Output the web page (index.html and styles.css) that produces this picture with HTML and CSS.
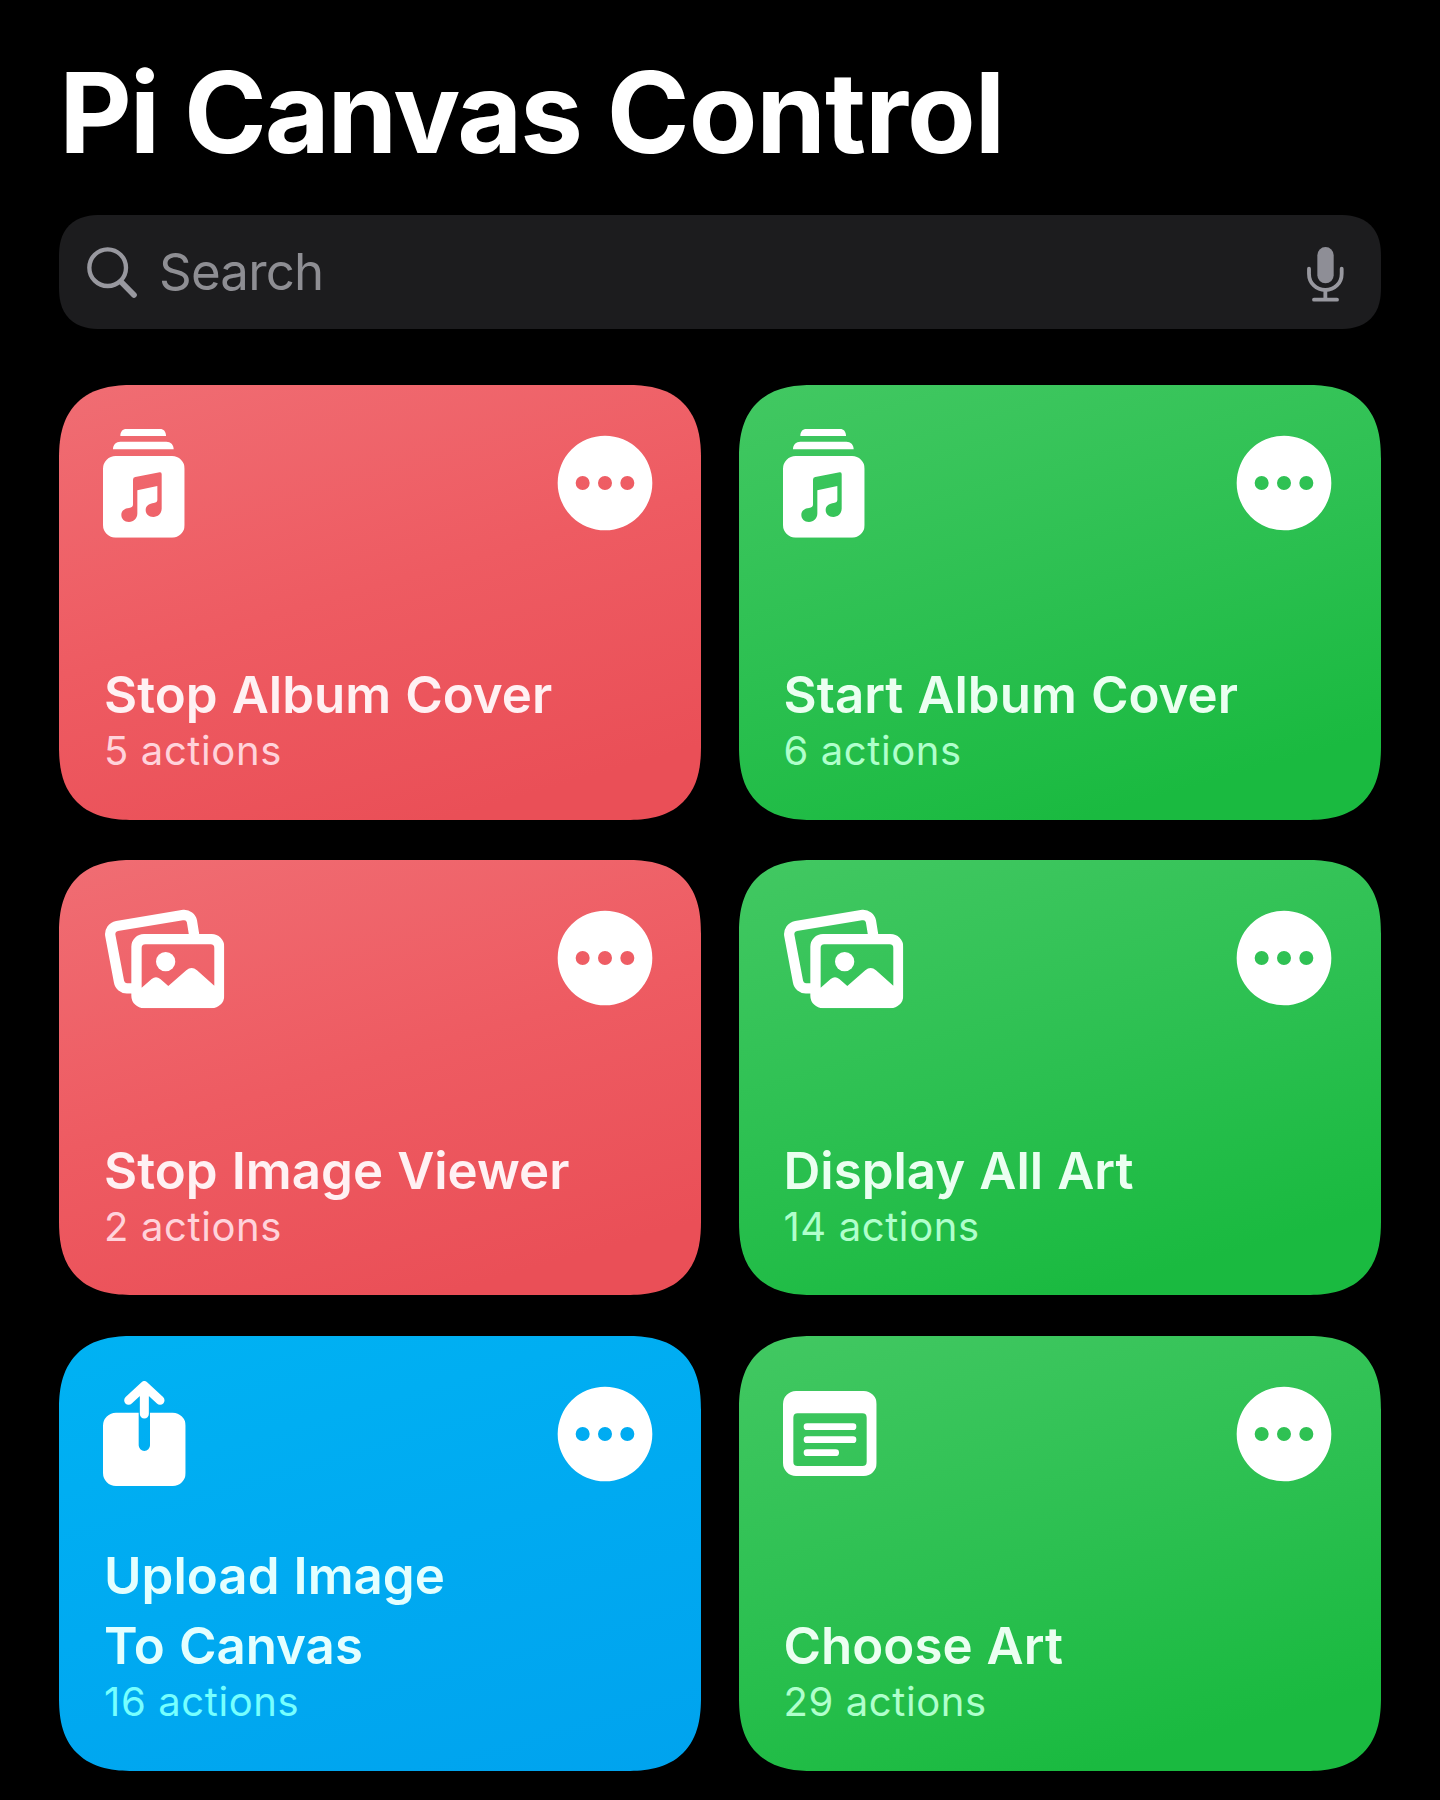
FILE: index.html
```html
<!DOCTYPE html>
<html lang="en">
<head>
<meta charset="utf-8">
<title>Pi Canvas Control</title>
<link rel="stylesheet" href="styles.css">
</head>
<body>
<svg class="sprite" aria-hidden="true">
  <symbol id="album" viewBox="160 162 245 326">
    <path d="M212 183C212 170 219 162 230 162H331C342 162 349 170 349 183ZM190 223C190 209 199 200 212 200H350C363 200 372 209 372 223Z"/>
    <path fill-rule="evenodd" d="M198 243H367A38 38 0 0 1 405 281V450A38 38 0 0 1 367 488H198A38 38 0 0 1 160 450V281A38 38 0 0 1 198 243ZM257 306L330 292Q336 291 336 298V400C336 417 324 426 311 426C297 426 288 417 288 405C288 391 300 386 312 384C320 382 323 380 323 374V333L263 346V415C263 431 252 441 238 441C224 441 215 431 215 420C215 406 226 400 238 399C247 397 250 395 250 388V314Q250 307 257 306Z"/>
  </symbol>
  <symbol id="photos" viewBox="44 57 358 298">
    <path fill="none" stroke="currentColor" stroke-width="31" d="M126 295H110A24 24 0 0 1 86 275L60 137A25 25 0 0 1 80 108L280 75A24 24 0 0 1 305 94L312 138"/>
    <path fill-rule="evenodd" d="M161 132H364A38 38 0 0 1 402 170V317A38 38 0 0 1 364 355H161A38 38 0 0 1 123 317V170A38 38 0 0 1 161 132ZM165 163Q154 163 154 174V293L184 267Q197 256 210 267L234 288L288 241Q304 227 320 241L372 287V174Q372 163 361 163Z"/>
    <circle cx="226" cy="215" r="29"/>
  </symbol>
  <symbol id="upload" viewBox="70 65 248 315">
    <path d="M109 160H177V258A17 17 0 0 0 211 258V160H279A39 39 0 0 1 318 199V341A39 39 0 0 1 279 380H109A39 39 0 0 1 70 341V199A39 39 0 0 1 109 160Z"/>
    <path fill="none" stroke="currentColor" stroke-width="27" stroke-linecap="round" stroke-linejoin="round" d="M147 123L194 79L241 123M194 82V164"/>
  </symbol>
  <symbol id="note" viewBox="68 65 281 255">
    <path fill-rule="evenodd" d="M107 65H310A39 39 0 0 1 349 104V281A39 39 0 0 1 310 320H107A39 39 0 0 1 68 281V104A39 39 0 0 1 107 65ZM112 132Q99 132 99 145V277Q99 290 112 290H306Q319 290 319 277V145Q319 132 306 132Z"/>
    <path fill="none" stroke="currentColor" stroke-width="20" stroke-linecap="round" d="M140 172H278M140 211H278M140 250H226"/>
  </symbol>
  <symbol id="more" viewBox="0 0 288 288">
    <path fill-rule="evenodd" d="M2 144a142 142 0 0 1 284 0a142 142 0 0 1-284 0ZM56 144a21 21 0 0 0 42 0a21 21 0 0 0-42 0ZM123 144a21 21 0 0 0 42 0a21 21 0 0 0-42 0ZM190 144a21 21 0 0 0 42 0a21 21 0 0 0-42 0Z"/>
  </symbol>
</svg>

<main class="page">
  <h1 class="title">Pi Canvas <span class="loose">Control</span></h1>

  <div class="search">
    <svg class="search-icon" viewBox="141 622 150 153"><circle cx="203" cy="684" r="55"/><path d="M243 726L282 766"/></svg>
    <span class="search-label">Search</span>
    <svg class="mic-icon" viewBox="200 141 110 164"><rect x="231" y="141" width="49" height="109" rx="24.5"/><path d="M206 206V221C206 250 228 270 255 270S304 250 304 221V206M255 270V299M221 299H290"/></svg>
  </div>

  <section class="grid">
    <article class="card red">
      <header class="card-top"><svg class="icon album"><use href="#album"/></svg><svg class="more"><use href="#more"/></svg></header>
      <h2 class="name">Stop Album Cover</h2>
      <p class="count">5 actions</p>
    </article>
    <article class="card green">
      <header class="card-top"><svg class="icon album"><use href="#album"/></svg><svg class="more"><use href="#more"/></svg></header>
      <h2 class="name">Start Album Cover</h2>
      <p class="count">6 actions</p>
    </article>
    <article class="card red">
      <header class="card-top"><svg class="icon photos"><use href="#photos"/></svg><svg class="more"><use href="#more"/></svg></header>
      <h2 class="name">Stop Image Viewer</h2>
      <p class="count">2 actions</p>
    </article>
    <article class="card green">
      <header class="card-top"><svg class="icon photos"><use href="#photos"/></svg><svg class="more"><use href="#more"/></svg></header>
      <h2 class="name">Display All Art</h2>
      <p class="count">14 actions</p>
    </article>
    <article class="card blue">
      <header class="card-top"><svg class="icon upload"><use href="#upload"/></svg><svg class="more"><use href="#more"/></svg></header>
      <h2 class="name">Upload Image<br>To Canvas</h2>
      <p class="count">16 actions</p>
    </article>
    <article class="card green">
      <header class="card-top"><svg class="icon note"><use href="#note"/></svg><svg class="more"><use href="#more"/></svg></header>
      <h2 class="name">Choose Art</h2>
      <p class="count">29 actions</p>
    </article>
  </section>
</main>
</body>
</html>
```
FILE: styles.css
```css
* { box-sizing: border-box; }

body {
  margin: 0;
  background: #000;
  color: #fff;
  font-family: Inter, "Liberation Sans", sans-serif;
}

.sprite { display: none; }

.page {
  height: 1800px;
  padding: 45px 59.3px 0;
  overflow: hidden;
}

.title {
  margin: 0;
  height: 170.4px;
  font-size: 112px;
  line-height: 134px;
  font-weight: 700;
  letter-spacing: -2.1px;
  word-spacing: 1.5px;
  white-space: nowrap;
}

.title .loose { letter-spacing: -1px; }

.search {
  display: flex;
  align-items: center;
  height: 114px;
  padding: 0 37.5px 0 27.7px;
  border-radius: 35px;
  background: #1c1c1e;
  color: #8e8e93;
}

.search-icon,
.mic-icon { flex: none; overflow: visible; stroke: #98989f; stroke-linecap: round; }
.search-icon { width: 50px; height: 51px; fill: none; stroke-width: 13; }
.search-icon path { stroke-width: 17; }
.mic-icon { width: 36.7px; height: 54.7px; margin-top: 4px; fill: none; stroke-width: 11.5; }
.mic-icon rect { fill: #8e8e96; stroke: none; }

.search-label {
  flex: 1;
  padding-left: 22px;
  font-size: 51px;
  line-height: 62px;
  letter-spacing: -0.8px;
}

.grid {
  display: grid;
  grid-template-columns: 1fr 1fr;
  grid-auto-rows: 435px;
  gap: 40.5px 37.4px;
  margin-top: 55.4px;
}

.card {
  display: flex;
  flex-direction: column;
  padding: 43.8px 48.7px 47.5px 44px;
  border-radius: 60px;
}

@supports (corner-shape: superellipse(1.4)) {
  .card { border-radius: 74px; corner-shape: superellipse(1.32); }
  .search { border-radius: 42px; corner-shape: superellipse(1.3); }
}

.red { background: linear-gradient(164deg, #f06d73 0%, #ee5b62 47%, #ea4f57 88%); --name: #fff1f3; --count: #ffd3db; }
.green { background: linear-gradient(164deg, #42c862 0%, #2cc051 48%, #1aba40 86%); --name: #ebfff1; --count: #b0ffcc; }
.blue { background: linear-gradient(164deg, #00b2f3 0%, #00aaf1 50%, #00a3ee 100%); --name: #e4ffff; --count: #76ffff; }

.card-top {
  display: flex;
  align-items: center;
  justify-content: space-between;
  height: 108.7px;
  margin-bottom: auto;
}

.icon, .more { display: block; flex: none; overflow: visible; fill: currentColor; }
.more { width: 96px; height: 96px; }
.album { width: 81.7px; height: 108.7px; }
.photos { width: 119.3px; height: 99.3px; margin-left: 1.3px; }
.upload { width: 82.7px; height: 105px; }
.note { width: 93.7px; height: 85px; }

.name {
  margin: 0;
  padding-left: 0.8px;
  color: var(--name);
  font-size: 51px;
  line-height: 70px;
  font-weight: 600;
  word-spacing: 1.2px;
  white-space: nowrap;
}

.count {
  margin: 0;
  padding-left: 0.8px;
  color: var(--count);
  font-size: 40px;
  line-height: 42px;
  letter-spacing: 0.6px;
}
```
